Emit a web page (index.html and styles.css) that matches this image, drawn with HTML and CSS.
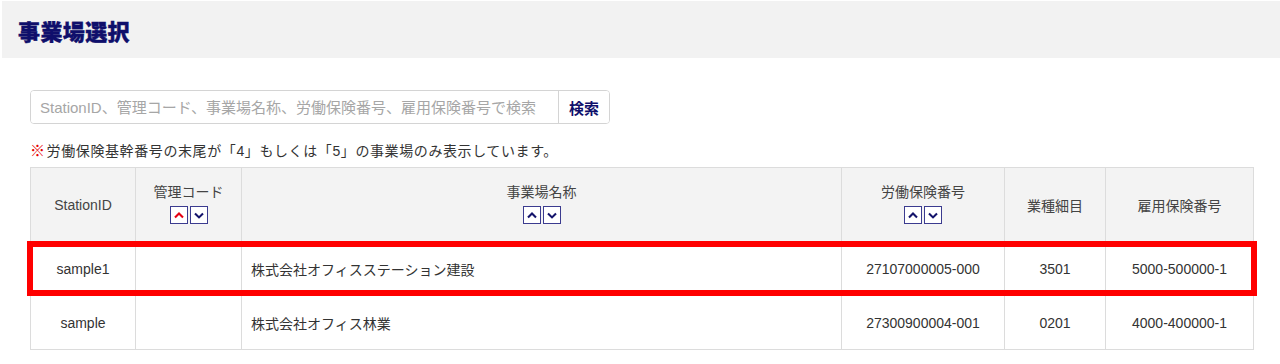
FILE: index.html
```html
<!DOCTYPE html>
<html lang="ja">
<head>
  <meta charset="UTF-8">
  <meta name="viewport" content="width=device-width, initial-scale=1.0">
  <title>事業場選択</title>
  <link rel="stylesheet" href="styles.css">
</head>
<body>

  <!-- Page title -->
  <div class="page-head">
    <h1>事業場選択</h1>
  </div>

  <div class="content">

    <!-- Search -->
    <form class="search" onsubmit="return false;">
      <input class="search-input" type="text" placeholder="StationID、管理コード、事業場名称、労働保険番号、雇用保険番号で検索">
      <button class="search-button" type="submit">検索</button>
    </form>

    <p class="note"><span class="mark">※</span>労働保険基幹番号の末尾が「4」もしくは「5」の事業場のみ表示しています。</p>

    <!-- Office list -->
    <div class="table-wrap">
      <table class="office-table">
        <colgroup>
          <col style="width: 105px">
          <col style="width: 106px">
          <col style="width: 600px">
          <col style="width: 163px">
          <col style="width: 101px">
          <col style="width: 148px">
        </colgroup>
        <thead>
          <tr>
            <th>StationID</th>
            <th>
              <div class="th-sort">
                <span>管理コード</span>
                <span class="sort">
                  <button class="sort-btn active" type="button"><svg viewBox="0 0 10 10"><path d="M2.5 6.5 L5 4 L7.5 6.5"/></svg></button>
                  <button class="sort-btn" type="button"><svg viewBox="0 0 10 10"><path d="M2.5 4 L5 6.5 L7.5 4"/></svg></button>
                </span>
              </div>
            </th>
            <th>
              <div class="th-sort">
                <span>事業場名称</span>
                <span class="sort">
                  <button class="sort-btn" type="button"><svg viewBox="0 0 10 10"><path d="M2.5 6.5 L5 4 L7.5 6.5"/></svg></button>
                  <button class="sort-btn" type="button"><svg viewBox="0 0 10 10"><path d="M2.5 4 L5 6.5 L7.5 4"/></svg></button>
                </span>
              </div>
            </th>
            <th>
              <div class="th-sort">
                <span>労働保険番号</span>
                <span class="sort">
                  <button class="sort-btn" type="button"><svg viewBox="0 0 10 10"><path d="M2.5 6.5 L5 4 L7.5 6.5"/></svg></button>
                  <button class="sort-btn" type="button"><svg viewBox="0 0 10 10"><path d="M2.5 4 L5 6.5 L7.5 4"/></svg></button>
                </span>
              </div>
            </th>
            <th>業種細目</th>
            <th>雇用保険番号</th>
          </tr>
        </thead>
        <tbody>
          <tr class="row-first">
            <td>sample1</td>
            <td></td>
            <td class="name">株式会社オフィスステーション建設</td>
            <td>27107000005-000</td>
            <td>3501</td>
            <td>5000-500000-1</td>
          </tr>
          <tr>
            <td>sample</td>
            <td></td>
            <td class="name">株式会社オフィス林業</td>
            <td>27300900004-001</td>
            <td>0201</td>
            <td>4000-400000-1</td>
          </tr>
        </tbody>
      </table>
      <!-- Highlight frame over the first row -->
      <div class="highlight"></div>
    </div>

  </div>

</body>
</html>
```

FILE: styles.css
```css
* {
  margin: 0;
  padding: 0;
  box-sizing: border-box;
}

body {
  font-family: "Liberation Sans", "Noto Sans CJK JP", sans-serif;
  font-size: 14px;
  color: #333;
  background: #fff;
}

.page-head {
  margin: 1px 0 0 2px;
  height: 57px;
  background: #f2f2f2;
  display: flex;
  align-items: center;
  padding-left: 16px;
}

.page-head h1 {
  font-size: 22px;
  font-weight: 900;
  color: #0f0f6b;
  letter-spacing: 0.4px;
  -webkit-text-stroke: 0.4px #0f0f6b;
}

.content {
  padding: 32px 27px 0 30px;
}

/* Search box */
.search {
  display: flex;
  width: 580px;
  height: 34px;
  border: 1px solid #d4d4d4;
  border-radius: 4px;
  overflow: hidden;
}

.search-input {
  flex: 1;
  border: none;
  outline: none;
  padding: 0 9px;
  font-family: inherit;
  font-size: 15px;
  color: #333;
}

.search-input::placeholder {
  color: #a6a6a6;
}

.search-button {
  width: 51px;
  border: none;
  border-left: 1px solid #d4d4d4;
  background: #fff;
  font-family: inherit;
  font-size: 15px;
  font-weight: bold;
  color: #0f0f6b;
  cursor: pointer;
}

.note {
  margin-top: 18px;
  font-size: 14px;
  line-height: 17px;
  letter-spacing: 0.6px;
  color: #333;
}

.note .mark {
  color: #e60000;
  font-weight: bold;
  font-size: 15px;
  margin-right: 1px;
}

/* Table */
.table-wrap {
  position: relative;
  margin-top: 7px;
  width: 1223px;
}

.office-table {
  width: 1223px;
  border-collapse: collapse;
  table-layout: fixed;
}

.office-table th,
.office-table td {
  border: 1px solid #dcdcdc;
  text-align: center;
  vertical-align: middle;
}

.office-table th {
  height: 74px;
  background: #f3f3f3;
  font-weight: normal;
  color: #444;
}

.office-table td {
  height: 54px;
  color: #333;
}

.office-table td.name {
  text-align: left;
  padding-left: 9px;
}

.th-sort {
  display: flex;
  flex-direction: column;
  align-items: center;
  gap: 5px;
  margin-top: -5px;
}

.sort {
  display: flex;
  gap: 2px;
}

.sort-btn {
  width: 18px;
  height: 18px;
  border: 1px solid #3b3b8f;
  background: #fff;
  display: flex;
  align-items: center;
  justify-content: center;
  cursor: pointer;
}

.sort-btn svg {
  width: 16px;
  height: 16px;
  fill: none;
  stroke: #14146b;
  stroke-width: 1.3;
}

.sort-btn.active svg {
  stroke: #e60012;
}

.highlight {
  position: absolute;
  top: 74px;
  left: -3px;
  right: -4px;
  height: 55px;
  border: 6px solid #ff0000;
  pointer-events: none;
}
```
